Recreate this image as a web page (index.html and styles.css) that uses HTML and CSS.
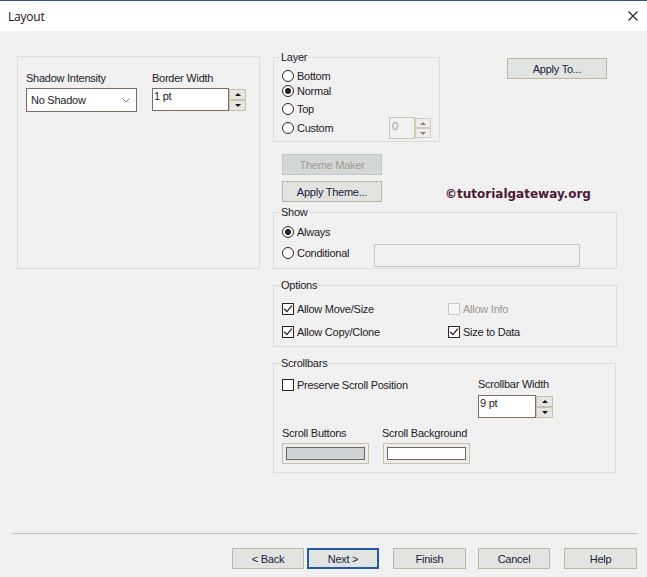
FILE: index.html
```html
<!DOCTYPE html>
<html>
<head>
<meta charset="utf-8">
<title>Layout</title>
<link rel="stylesheet" href="styles.css">
</head>
<body>
<div class="titlebar">
  <span class="title">Layout</span>
  <svg class="close" width="10" height="10" viewBox="0 0 10 10"><path d="M0.5 0.5 L9.5 9.5 M9.5 0.5 L0.5 9.5" stroke="#2a1a22" stroke-width="1.1" fill="none"/></svg>
</div>
<div class="main">
  <div class="panel">
    <div class="field f1">
      <div class="lbl">Shadow Intensity</div>
      <div class="select"><span>No Shadow</span><svg width="8" height="5" viewBox="0 0 8 5"><path d="M0.5 0.5 L4 4 L7.5 0.5" stroke="#7a7a7a" stroke-width="1" fill="none"/></svg></div>
    </div>
    <div class="field">
      <div class="lbl">Border Width</div>
      <div class="spin">
        <div class="spin-input w77">1 pt</div>
        <div class="spin-btns"><span class="sb"><i class="up"></i></span><span class="sb"><i class="down"></i></span></div>
      </div>
    </div>
  </div>
  <div class="right">
    <div class="row1">
      <div class="group layer">
        <span class="legend">Layer</span>
        <div class="rrow"><span class="radio"></span>Bottom</div>
        <div class="rrow r2"><span class="radio on"></span>Normal</div>
        <div class="rrow r3"><span class="radio"></span>Top</div>
        <div class="rrow r4"><span class="radio"></span>Custom
          <div class="spin dis">
            <div class="spin-input w26">0</div>
            <div class="spin-btns"><span class="sb"><i class="up"></i></span><span class="sb"><i class="down"></i></span></div>
          </div>
        </div>
      </div>
      <button class="btn apply-to">Apply To...</button>
    </div>
    <button class="btn disabled theme-maker">Theme Maker</button>
    <div class="row-theme">
      <button class="btn w100">Apply Theme...</button>
      <span class="watermark">©tutorialgateway.org</span>
    </div>
    <div class="group show">
      <span class="legend">Show</span>
      <div class="rrow"><span class="radio on"></span>Always</div>
      <div class="cond-row">
        <div class="rrow cond-lbl"><span class="radio"></span>Conditional</div>
        <div class="text-input"></div>
      </div>
    </div>
    <div class="group options">
      <span class="legend">Options</span>
      <div class="opt-grid">
        <div class="crow"><span class="check on"><svg width="10" height="10" viewBox="0 0 10 10"><path d="M1.2 4.8 L3.9 7.6 L8.8 1.6" stroke="#2a1a22" stroke-width="1.3" fill="none"/></svg></span>Allow Move/Size</div>
        <div class="crow disabled"><span class="check"></span>Allow Info</div>
        <div class="crow"><span class="check on"><svg width="10" height="10" viewBox="0 0 10 10"><path d="M1.2 4.8 L3.9 7.6 L8.8 1.6" stroke="#2a1a22" stroke-width="1.3" fill="none"/></svg></span>Allow Copy/Clone</div>
        <div class="crow"><span class="check on"><svg width="10" height="10" viewBox="0 0 10 10"><path d="M1.2 4.8 L3.9 7.6 L8.8 1.6" stroke="#2a1a22" stroke-width="1.3" fill="none"/></svg></span>Size to Data</div>
      </div>
    </div>
    <div class="group scroll">
      <span class="legend">Scrollbars</span>
      <div class="scroll-top">
        <div class="crow preserve"><span class="check"></span>Preserve Scroll Position</div>
        <div class="sw-col">
          <div class="lbl">Scrollbar Width</div>
          <div class="spin">
            <div class="spin-input w58">9 pt</div>
            <div class="spin-btns"><span class="sb"><i class="up"></i></span><span class="sb"><i class="down"></i></span></div>
          </div>
        </div>
      </div>
      <div class="scroll-bottom">
        <div class="cb-col">
          <div class="lbl">Scroll Buttons</div>
          <div class="colorbox"><div class="swatch gray"></div></div>
        </div>
        <div class="cb-col">
          <div class="lbl">Scroll Background</div>
          <div class="colorbox shift"><div class="swatch white"></div></div>
        </div>
      </div>
    </div>
  </div>
</div>
<div class="footer">
  <button class="btn fb">&lt; Back</button>
  <button class="btn fb next">Next &gt;</button>
  <button class="btn fb w73 g14">Finish</button>
  <button class="btn fb g12">Cancel</button>
  <button class="btn fb w73 g14">Help</button>
</div>
</body>
</html>
```

FILE: styles.css
```css
* { box-sizing: border-box; }
html, body { margin: 0; padding: 0; }
body {
  width: 647px;
  height: 577px;
  overflow: hidden;
  background: #f0f0f0;
  font-family: "Liberation Sans", Arial, sans-serif;
  font-size: 11px;
  letter-spacing: -0.25px;
  color: #231a26;
}

.titlebar {
  height: 31px;
  background: #ffffff;
  border-top: 1px solid #2b579a;
  display: flex;
  align-items: center;
  justify-content: space-between;
  padding: 0 9px 0 8px;
}
.title {
  font-family: "Open Sans", "Noto Sans", sans-serif;
  font-size: 12px;
  letter-spacing: -0.2px;
  color: #1a1016;
}
.close { display: block; }

.main {
  display: flex;
  align-items: flex-start;
  height: 502px;
  padding: 25px 0 0 17px;
  gap: 13px;
}

.panel {
  width: 243px;
  height: 213px;
  border: 1px solid #dcdcdc;
  display: flex;
  align-items: flex-start;
  gap: 15px;
  padding: 15px 0 0 8px;
}
.f1 { width: 111px; }
.lbl { height: 13px; line-height: 13px; white-space: nowrap; }

.select {
  margin-top: 3px;
  width: 111px;
  height: 24px;
  border: 1px solid #7f6a5f;
  background: #ffffff;
  display: flex;
  align-items: center;
  justify-content: space-between;
  padding: 0 6px 0 4px;
}
.select svg { display: block; }

.spin { margin-top: 3px; display: flex; height: 23px; }
.spin-input {
  border: 1px solid #7f6a5f;
  background: #ffffff;
  padding: 1px 0 0 1px;
  line-height: 13px;
}
.w77 { width: 77px; }
.w58 { width: 58px; }
.w26 { width: 26px; }
.spin-btns {
  width: 17px;
  display: flex;
  flex-direction: column;
  padding-top: 1px;
}
.sb {
  height: 11px;
  border: 1px solid #cbc2ad;
  background-color: #e4e5e2;
  display: flex;
  align-items: center;
  justify-content: center;
}
.sb i { width: 0; height: 0; border-left: 3px solid transparent; border-right: 3px solid transparent; }
.sb i.up { border-bottom: 3px solid #1a1018; }
.sb i.down { border-top: 3px solid #1a1018; }

.right {
  width: 344px;
  margin-top: 1px;
  display: flex;
  flex-direction: column;
  align-items: flex-start;
}
.row1 { display: flex; align-items: flex-start; }

.group { position: relative; border: 1px solid #dcdcdc; }
.legend {
  position: absolute;
  top: -7px;
  left: 6px;
  padding: 0 1px;
  background: #f0f0f0;
  line-height: 13px;
  white-space: nowrap;
}

.layer { width: 167px; padding: 11px 8px 2px 8px; }
.rrow { display: flex; align-items: center; height: 14px; white-space: nowrap; }
.r2 { margin-top: 1px; }
.r3 { margin-top: 4px; }
.r4 { margin-top: 1px; height: 22px; }
.r4 .spin { margin-top: 0; margin-left: auto; height: 22px; }
.spin.dis .spin-input { border-color: #cfc6b2; background: #f0f0f0; color: #a39b90; padding-left: 2px; padding-top: 2px; }
.spin.dis .spin-btns { width: 16px; padding-top: 1px; }
.spin.dis .sb { height: 10px; border-color: #d4ccba; background: #ececea; }
.spin.dis .sb i.up { border-bottom-color: #8a8078; }
.spin.dis .sb i.down { border-top-color: #8a8078; }

.radio {
  position: relative;
  flex: none;
  width: 12px;
  height: 12px;
  border: 1px solid #2e2228;
  border-radius: 50%;
  background: #ffffff;
  margin-right: 3px;
}
.radio.on::after {
  content: "";
  position: absolute;
  left: 2px;
  top: 2px;
  width: 6px;
  height: 6px;
  border-radius: 50%;
  background: #2a1a22;
}

.btn {
  height: 21px;
  padding: 0;
  border: 1px solid #bfb5a0;
  background-color: #e1e3e1;
  background-image: radial-gradient(circle, rgba(255,255,255,0.3) 0.5px, transparent 0.8px);
  background-size: 5px 5px;
  font-family: "Liberation Sans", Arial, sans-serif;
  font-size: 11px;
  letter-spacing: -0.25px;
  color: #1c1a3c;
}
.apply-to { width: 100px; margin-left: 67px; margin-top: 1px; }
.theme-maker {
  width: 100px;
  margin-left: 9px;
  margin-top: 12px;
  border-color: #c3c8ca;
  background-color: #c4c9cb;
  background-image: radial-gradient(circle, rgba(255,255,255,0.4) 0.6px, transparent 0.9px);
  background-size: 2px 2px;
  color: #a29a8e;
}
.w100 { width: 100px; }
.row-theme { display: flex; align-items: flex-start; margin-top: 6px; margin-left: 9px; }
.watermark {
  margin-left: 63px;
  margin-top: 6px;
  font-family: "DejaVu Sans", Verdana, sans-serif;
  font-weight: bold;
  font-size: 12px;
  line-height: 14px;
  letter-spacing: 0;
  color: #4b1838;
  white-space: nowrap;
}

.show { width: 344px; height: 57px; margin-top: 10px; padding: 12px 0 0 8px; }
.cond-row { display: flex; align-items: flex-start; margin-top: 5px; }
.cond-lbl { width: 92px; margin-top: 2px; }
.text-input { width: 206px; height: 23px; border: 1px solid #c6c6c6; background: #f0f0f0; }

.options { width: 344px; height: 62px; margin-top: 16px; padding: 16px 0 0 8px; }
.opt-grid { display: grid; grid-template-columns: 166px auto; row-gap: 10px; }
.crow { display: flex; align-items: center; height: 13px; white-space: nowrap; }
.check {
  flex: none;
  width: 12px;
  height: 12px;
  border: 1px solid #2e2228;
  background: #ffffff;
  margin-right: 3px;
  display: flex;
  align-items: center;
  justify-content: center;
}
.check svg { display: block; }
.crow.disabled { color: #9d968d; }
.crow.disabled .check { border-color: #c9c9c9; background: #f6f6f6; }

.scroll { width: 343px; height: 110px; margin-top: 16px; padding: 14px 0 0 8px; }
.scroll-top { display: flex; align-items: flex-start; }
.preserve { width: 196px; }
.sw-col .spin { margin-top: 4px; }
.scroll-bottom { display: flex; margin-top: 9px; }
.cb-col { width: 100px; }
.colorbox {
  margin-top: 3px;
  width: 87px;
  height: 21px;
  border: 1px solid #c9c1aa;
  background: #ececec;
  padding: 3px;
}
.colorbox.shift { margin-left: 1px; }
.swatch { height: 100%; border: 1px solid #6e6660; }
.swatch.gray {
  background-color: #c2c6c6;
  background-image: radial-gradient(circle, rgba(255,255,255,0.35) 0.6px, transparent 0.9px);
  background-size: 2px 2px;
}
.swatch.white { background: #ffffff; }

.footer {
  margin: 0 10px 0 12px;
  border-top: 1px solid #c9c1b1;
  padding-top: 14px;
  display: flex;
  justify-content: flex-end;
}
.fb { width: 72px; }
.w73 { width: 73px; }
.next { margin-left: 3px; border: 2px solid #2757a3; }
.g14 { margin-left: 14px; }
.g12 { margin-left: 12px; }
```
